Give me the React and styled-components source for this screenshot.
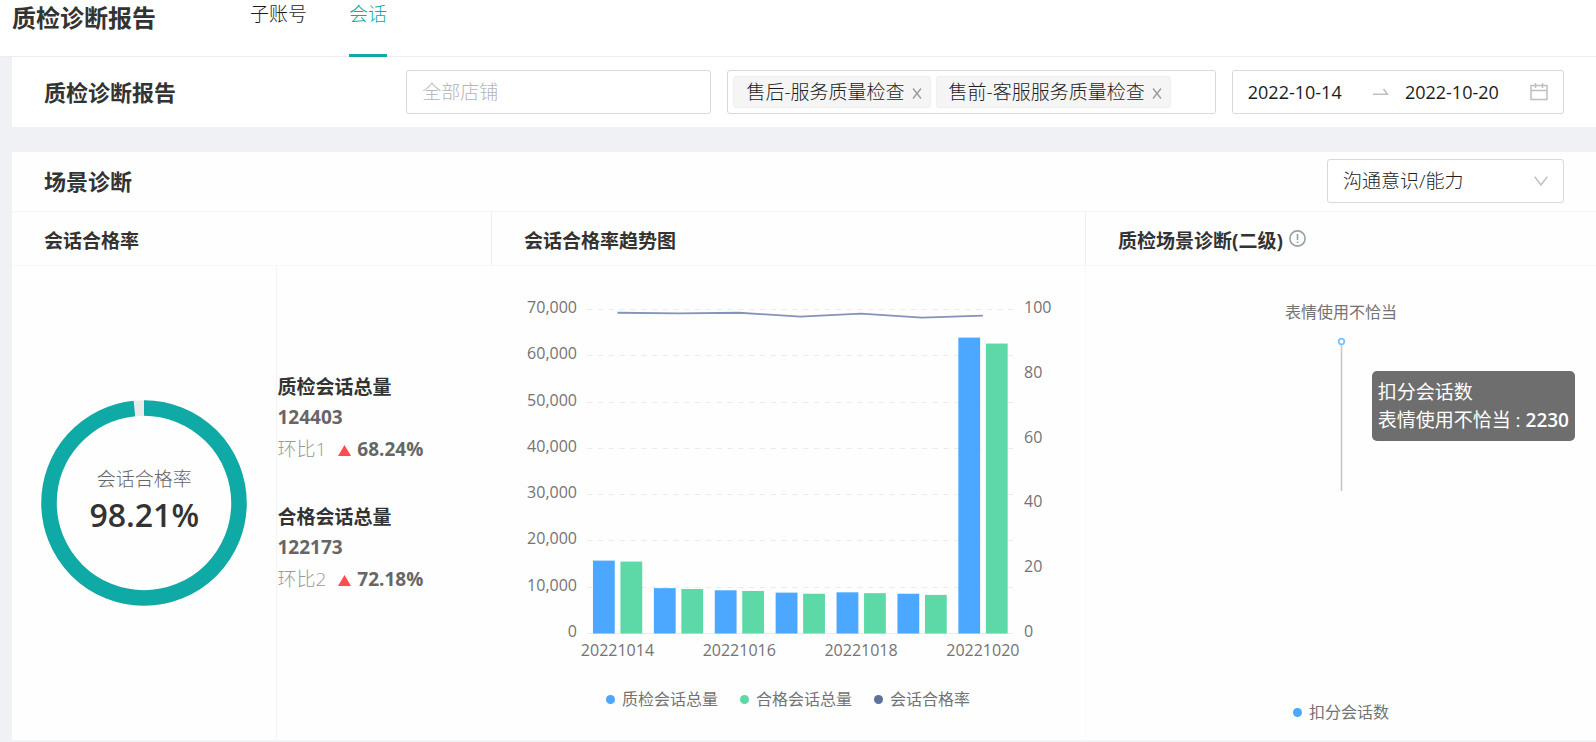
import { useState } from 'react'
import styled, { createGlobalStyle } from 'styled-components'

const GlobalStyle = createGlobalStyle`
    * {
        box-sizing: border-box;
    }
    body {
        margin: 0;
        background-color: #f0f1f5;
        color: #1c1c1c;
        font-family: 'Open Sans', 'Noto Sans CJK SC', sans-serif;
        font-size: 19px;
        font-weight: 300;
        line-height: 28px;
    }
    h1, h2, h3, p, dl, dd, dt, ul {
        margin: 0;
        padding: 0;
    }
    input, select, button {
        font: inherit;
        color: inherit;
        border: 0;
        padding: 0;
        background: none;
        outline: none;
    }
`

const Header = styled.header`
    display: flex;
    align-items: stretch;
    height: 57px;
    padding-left: 12px;
    background-color: #fff;
    border-bottom: 1px solid #ededed;
`
const PageTitle = styled.h1`
    width: 238px;
    padding-top: 4px;
    font-size: 24px;
    font-weight: 700;
    color: #333;
`
const Tabs = styled.nav`
    display: flex;
    gap: 42px;
    margin-bottom: -1px;
`
const Tab = styled.a`
    color: ${({ $active }) => ($active ? '#0fa9a6' : '#1c1c1c')};
    border-bottom: 3px solid ${({ $active }) => ($active ? '#0fa9a6' : 'transparent')};
    text-decoration: none;
`

const Main = styled.main`
    display: flex;
    flex-direction: column;
    gap: 25px;
    padding-left: 12px;
`
const FilterBar = styled.section`
    display: grid;
    grid-template-columns: 346fr 305fr 488fr 332fr;
    gap: 16px;
    align-items: center;
    height: 70px;
    padding: 0 32px;
    background-color: #fff;
`
const SectionTitle = styled.h2`
    font-size: 22px;
    font-weight: 700;
    color: #333;
`
const Field = styled.div`
    display: flex;
    align-items: center;
    min-width: 0;
    height: 44px;
    padding: 0 ${({ $pad }) => $pad || 15}px;
    gap: ${({ $gap }) => $gap || 0}px;
    background-color: #fff;
    border: 1px solid #d9d9d9;
    border-radius: 3px;
`
const TextInput = styled.input`
    flex: 1;
    width: 100%;
    min-width: 0;

    &::placeholder {
        color: #b5b5b5;
        opacity: 1;
    }
`
const DateInput = styled(TextInput)`
    font-size: 18px;
    font-weight: 400;
`
const Tag = styled.span`
    display: flex;
    align-items: center;
    gap: 7px;
    height: 32px;
    padding: 0 8px 0 12px;
    background-color: #f5f5f5;
    border: 1px solid #f0f0f0;
    border-radius: 3px;
    white-space: nowrap;
`
const TagClose = styled.button`
    display: flex;
    padding-top: 3px;
    cursor: pointer;
`

const Card = styled.section`
    background-color: #fefefe;
    border-bottom: 1px solid #f5f5f5;
`
const CardHead = styled.div`
    display: flex;
    align-items: center;
    justify-content: space-between;
    height: 60px;
    padding: 0 32px 2px;
    border-bottom: 1px solid #f4f4f4;
`
const SelectField = styled(Field)`
    width: 237px;

    select {
        flex: 1;
        appearance: none;
    }
    svg {
        pointer-events: none;
    }
`
const Columns = styled.div`
    display: grid;
    grid-template-columns: 479fr 594fr 511fr;
`
const Panel = styled.div`
    display: flex;
    flex-direction: column;
`
const PanelHead = styled.div`
    display: flex;
    align-items: center;
    gap: 6px;
    height: 54px;
    padding: 4px 32px 0;
    border-bottom: 1px solid #f9f9f9;
    border-left: ${({ $divided }) => ($divided ? '1px solid #efefef' : '0')};

    svg {
        margin-bottom: 4px;
    }
`
const PanelTitle = styled.h3`
    font-size: 19px;
    font-weight: 700;
    color: #333;
`
const PanelBody = styled.div`
    position: relative;
    display: flex;
    flex-direction: ${({ $row }) => ($row ? 'row' : 'column')};
    height: 474px;
    border-left: ${({ $divided }) => ($divided ? '1px solid #fafafa' : '0')};
`

const DonutBox = styled.div`
    flex: 265;
    display: grid;
    place-items: center;
    border-right: 1px solid #f4f4f4;

    > * {
        grid-area: 1 / 1;
    }
`
const DonutLabel = styled.div`
    text-align: center;
    color: #666;
    padding-bottom: 4px;

    strong {
        display: block;
        font-size: 32px;
        font-weight: 600;
        line-height: 44px;
        color: #333;
    }
`
const Stats = styled.div`
    flex: 214;
    display: flex;
    flex-direction: column;
    justify-content: center;
    gap: 38px;
    padding-bottom: 40px;
`
const Stat = styled.dl`
    dt, dd {
        line-height: 30px;
    }
    dt {
        font-weight: 700;
        color: #333;
    }
    .total {
        font-weight: 700;
        color: #666;
    }
    .ratio {
        display: flex;
        align-items: center;
        padding-top: 2px;
        color: #999;
    }
    .ratio svg {
        margin: 2px 6px 0 12px;
    }
    .ratio strong {
        font-weight: 700;
        color: #666;
    }
`

const Drawing = styled.svg`
    display: block;
    width: 100%;
    height: 408px;

    text {
        font-size: 16px;
        font-weight: 400;
        fill: #737373;
    }
`
const Legend = styled.ul`
    display: flex;
    justify-content: center;
    gap: 22px;
    padding-top: ${({ $top }) => $top}px;
    list-style: none;
    font-size: 16px;
    font-weight: 400;
    color: #737373;

    li {
        display: flex;
        align-items: center;
        gap: 7px;
    }
`
const Dot = styled.i`
    width: 9px;
    height: 9px;
    border-radius: 50%;
    background-color: ${({ $color }) => $color};
`
const Tooltip = styled.div`
    position: absolute;
    top: 105px;
    right: 21px;
    padding: 7px 6px;
    background-color: #6e6e6e;
    border-radius: 5px;
    color: #fff;
    font-weight: 400;
    white-space: nowrap;

    b {
        font-weight: 600;
    }
`

const BLUE = '#4ba7ff'
const GREEN = '#5cd9a6'
const NAVY = '#5d7199'

const days = [
    { date: '20221014', total: 15750, passed: 15540, rate: 99.4 },
    { date: '20221015', total: 9800, passed: 9620, rate: 99.2 },
    { date: '20221016', total: 9330, passed: 9190, rate: 99.4 },
    { date: '20221017', total: 8830, passed: 8590, rate: 98.2 },
    { date: '20221018', total: 8900, passed: 8710, rate: 99.1 },
    { date: '20221019', total: 8590, passed: 8340, rate: 97.9 },
    { date: '20221020', total: 63930, passed: 62640, rate: 98.5 },
]

const stats = [
    { name: '质检会话总量', total: '124403', label: '环比1', ratio: '68.24%' },
    { name: '合格会话总量', total: '122173', label: '环比2', ratio: '72.18%' },
]

const CloseIcon = () => (
    <svg width="10" height="11" viewBox="0 0 10 11" fill="none" stroke="#999" strokeWidth="1.3">
        <path d="M1 .5l8 10M9 .5l-8 10" />
    </svg>
)

const ArrowIcon = () => (
    <svg width="16" height="8" viewBox="0 0 16 8" fill="none" stroke="#bfbfbf" strokeWidth="1.6">
        <path d="M0 6.3h14.5L10.5 1" />
    </svg>
)

const CalendarIcon = () => (
    <svg width="18" height="18" viewBox="0 0 18 18" fill="none" stroke="#bfbfbf" strokeWidth="1.5">
        <path d="M1 2.5h16v14H1zM1 7.5h16M5.5 0v5M12.5 0v5" />
    </svg>
)

const ChevronIcon = () => (
    <svg width="14" height="10" viewBox="0 0 14 10" fill="none" stroke="#bfbfbf" strokeWidth="1.5">
        <path d="M.6.6L7 9 13.4.6" />
    </svg>
)

const InfoIcon = () => (
    <svg width="17" height="17" viewBox="0 0 17 17" fill="none" stroke="#95a3a3" strokeWidth="1.6">
        <circle cx="8.5" cy="8.5" r="7.6" />
        <path d="M8.5 4v6M8.5 11.4v1.6" />
    </svg>
)

const UpIcon = () => (
    <svg width="13" height="11" viewBox="0 0 13 11">
        <path d="M6.5 0L13 11H0z" fill="#ff4d4f" />
    </svg>
)

const Donut = ({ percent }) => {
    const length = 2 * Math.PI * 95
    return (
        <svg width="206" height="206" viewBox="0 0 206 206" fill="none" strokeWidth="15.5">
            <circle cx="103" cy="103" r="95" stroke="#ebebeb" />
            <circle
                cx="103"
                cy="103"
                r="95"
                stroke="#0fa9a6"
                strokeDasharray={`${(length * percent) / 100} ${length}`}
                transform="rotate(-90 103 103)"
            />
        </svg>
    )
}

const TrendChart = () => {
    const bottom = 367.5
    const height = 324
    const left = 96
    const step = 60.9
    const y = (value, max) => bottom - (value / max) * height
    const center = (i) => left + step * (i + 0.5)

    return (
        <Drawing viewBox="0 0 594 408">
            {[0, 1, 2, 3, 4, 5, 6, 7].map((n) => (
                <g key={n}>
                    <line
                        x1={left}
                        x2={left + step * 7}
                        y1={Math.floor(y(n, 7)) + 0.5}
                        y2={Math.floor(y(n, 7)) + 0.5}
                        stroke="#ebebeb"
                        strokeDasharray={n ? '5.4 5.4' : undefined}
                    />
                    <text x="86" y={y(n, 7) + 3.5} textAnchor="end">
                        {n ? `${n}0,000` : 0}
                    </text>
                </g>
            ))}
            {[0, 20, 40, 60, 80, 100].map((n) => (
                <text key={n} x="533" y={y(n, 100) + 3.5}>{n}</text>
            ))}
            {days.map((day, i) => (
                <g key={day.date}>
                    <rect x={center(i) - 24.5} y={y(day.total, 70000)} width="21.8" height={bottom - y(day.total, 70000)} fill={BLUE} />
                    <rect x={center(i) + 3} y={y(day.passed, 70000)} width="21.8" height={bottom - y(day.passed, 70000)} fill={GREEN} />
                    {i % 2 === 0 && (
                        <text x={center(i)} y="390" textAnchor="middle">{day.date}</text>
                    )}
                </g>
            ))}
            <polyline
                points={days.map((day, i) => `${center(i)},${y(day.rate, 100.4)}`).join(' ')}
                fill="none"
                stroke="#8493ba"
                strokeWidth="1.8"
            />
        </Drawing>
    )
}

const SceneChart = () => (
    <Drawing viewBox="0 0 510 408">
        <text x="255" y="52" textAnchor="middle">表情使用不恰当</text>
        <line x1="255.5" x2="255.5" y1="78" y2="225" stroke="#c8c8c8" strokeWidth="1.6" />
        <circle cx="255.5" cy="75.5" r="2.8" fill="#fff" stroke="#76c3ff" strokeWidth="1.8" />
    </Drawing>
)

const App = () => {
    const [tags, setTags] = useState(['售后-服务质量检查', '售前-客服服务质量检查'])

    return (
        <>
            <GlobalStyle />
            <Header>
                <PageTitle>质检诊断报告</PageTitle>
                <Tabs>
                    <Tab href="#account">子账号</Tab>
                    <Tab href="#session" $active>会话</Tab>
                </Tabs>
            </Header>
            <Main>
                <FilterBar>
                    <SectionTitle>质检诊断报告</SectionTitle>
                    <Field>
                        <TextInput aria-label="店铺" placeholder="全部店铺" />
                    </Field>
                    <Field $pad={5} $gap={5}>
                        {tags.map((tag) => (
                            <Tag key={tag}>
                                {tag}
                                <TagClose aria-label={`移除${tag}`} onClick={() => setTags(tags.filter((t) => t !== tag))}>
                                    <CloseIcon />
                                </TagClose>
                            </Tag>
                        ))}
                    </Field>
                    <Field $gap={16}>
                        <DateInput aria-label="开始日期" defaultValue="2022-10-14" />
                        <ArrowIcon />
                        <DateInput aria-label="结束日期" defaultValue="2022-10-20" />
                        <CalendarIcon />
                    </Field>
                </FilterBar>
                <Card>
                    <CardHead>
                        <SectionTitle>场景诊断</SectionTitle>
                        <SelectField>
                            <select aria-label="场景">
                                <option>沟通意识/能力</option>
                            </select>
                            <ChevronIcon />
                        </SelectField>
                    </CardHead>
                    <Columns>
                        <Panel>
                            <PanelHead>
                                <PanelTitle>会话合格率</PanelTitle>
                            </PanelHead>
                            <PanelBody $row>
                                <DonutBox>
                                    <Donut percent={98.21} />
                                    <DonutLabel>
                                        会话合格率
                                        <strong>98.21%</strong>
                                    </DonutLabel>
                                </DonutBox>
                                <Stats>
                                    {stats.map((stat) => (
                                        <Stat key={stat.name}>
                                            <dt>{stat.name}</dt>
                                            <dd className='total'>{stat.total}</dd>
                                            <dd className='ratio'>
                                                {stat.label}
                                                <UpIcon />
                                                <strong>{stat.ratio}</strong>
                                            </dd>
                                        </Stat>
                                    ))}
                                </Stats>
                            </PanelBody>
                        </Panel>
                        <Panel>
                            <PanelHead $divided>
                                <PanelTitle>会话合格率趋势图</PanelTitle>
                            </PanelHead>
                            <PanelBody>
                                <TrendChart />
                                <Legend $top={11}>
                                    <li><Dot $color={BLUE} />质检会话总量</li>
                                    <li><Dot $color={GREEN} />合格会话总量</li>
                                    <li><Dot $color={NAVY} />会话合格率</li>
                                </Legend>
                            </PanelBody>
                        </Panel>
                        <Panel>
                            <PanelHead $divided>
                                <PanelTitle>质检场景诊断(二级)</PanelTitle>
                                <InfoIcon />
                            </PanelHead>
                            <PanelBody $divided>
                                <SceneChart />
                                <Legend $top={24}>
                                    <li><Dot $color={BLUE} />扣分会话数</li>
                                </Legend>
                                <Tooltip>
                                    <p>扣分会话数</p>
                                    <p>表情使用不恰当 : <b>2230</b></p>
                                </Tooltip>
                            </PanelBody>
                        </Panel>
                    </Columns>
                </Card>
            </Main>
        </>
    )
}

export default App
